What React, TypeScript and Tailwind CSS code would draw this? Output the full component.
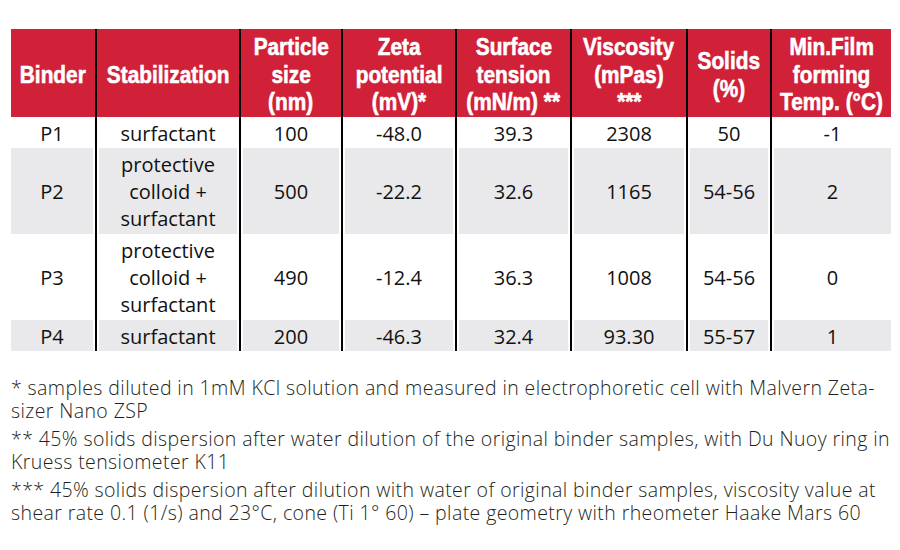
const cols = ["w-[84px]", "w-[144px]", "w-[102px]", "w-[114px]", "w-[115px]", "w-[116px]", "w-[84px]", "w-[121px]"];

const head = [
  ["Binder"],
  ["Stabilization"],
  ["Particle", "size", "(nm)"],
  ["Zeta", "potential", "(mV)*"],
  ["Surface", "tension", "(mN/m) **"],
  ["Viscosity", "(mPas)", "***"],
  ["Solids", "(%)"],
  ["Min.Film", "forming", "Temp. (°C)"],
];

const rows = [
  { tall: false, cells: [["P1"], ["surfactant"], ["100"], ["-48.0"], ["39.3"], ["2308"], ["50"], ["-1"]] },
  { tall: true, cells: [["P2"], ["protective", "colloid +", "surfactant"], ["500"], ["-22.2"], ["32.6"], ["1165"], ["54-56"], ["2"]] },
  { tall: true, cells: [["P3"], ["protective", "colloid +", "surfactant"], ["490"], ["-12.4"], ["36.3"], ["1008"], ["54-56"], ["0"]] },
  { tall: false, cells: [["P4"], ["surfactant"], ["200"], ["-46.3"], ["32.4"], ["93.30"], ["55-57"], ["1"]] },
];

const notes = [
  ["* samples diluted in 1mM KCl solution and measured in electrophoretic cell with Malvern Zeta-", "sizer Nano ZSP"],
  ["** 45% solids dispersion after water dilution of the original binder samples, with Du Nuoy ring in", "Kruess tensiometer K11"],
  ["*** 45% solids dispersion after dilution with water of original binder samples, viscosity value at", "shear rate 0.1 (1/s) and 23°C, cone (Ti 1° 60) – plate geometry with rheometer Haake Mars 60"],
];

function edge(i: number) {
  return [cols[i], i > 0 ? "border-l-2 border-black pl-[2px]" : "", i < cols.length - 1 ? "pr-[2px]" : ""].join(" ");
}

export default function App() {
  return (
    <div className="h-[550px] w-[900px] overflow-hidden bg-white pt-[29px]">
      <div className="ml-[11px] w-[880px]">
        <div className="flex h-[88px] bg-[#d02139]">
          {head.map((h, i) => (
            <div
              key={i}
              className={`${cols[i]} ${i > 0 ? "border-l-2 border-black" : ""} flex flex-col items-center justify-center pt-[3px] text-center text-[24.5px] font-bold leading-[27.5px] text-white [-webkit-text-stroke:0.6px_white] [font-family:'Liberation_Sans',Arial,sans-serif]`}
            >
              {h.map((t) => (
                <span key={t} className="inline-block scale-x-[0.85] whitespace-nowrap">{t}</span>
              ))}
            </div>
          ))}
        </div>
        {rows.map((r, ri) => (
          <div key={ri} className={`flex ${r.tall ? "h-[86px]" : "h-[31px]"}`}>
            {r.cells.map((c, i) => (
              <div key={i} className={`${edge(i)} h-full`}>
                <div
                  className={`flex h-full flex-col items-center justify-center pt-[1px] text-center text-[20px] leading-[27px] text-[#111] [font-family:'Open_Sans',sans-serif] ${ri % 2 === 1 ? "bg-[#e9e9eb]" : ""}`}
                >
                  {c.map((t) => (
                    <span key={t} className="whitespace-nowrap">{t}</span>
                  ))}
                </div>
              </div>
            ))}
          </div>
        ))}
      </div>
      <div className="mt-[25px] flex flex-col gap-[5px] px-[11px] text-[19.5px] font-light leading-[23px] tracking-[0.4px] text-[#231f20] [font-family:'Open_Sans',sans-serif]">
        {notes.map((n, i) => (
          <p key={i}>
            {n.map((l) => (
              <span key={l} className="block whitespace-nowrap">{l}</span>
            ))}
          </p>
        ))}
      </div>
    </div>
  );
}
